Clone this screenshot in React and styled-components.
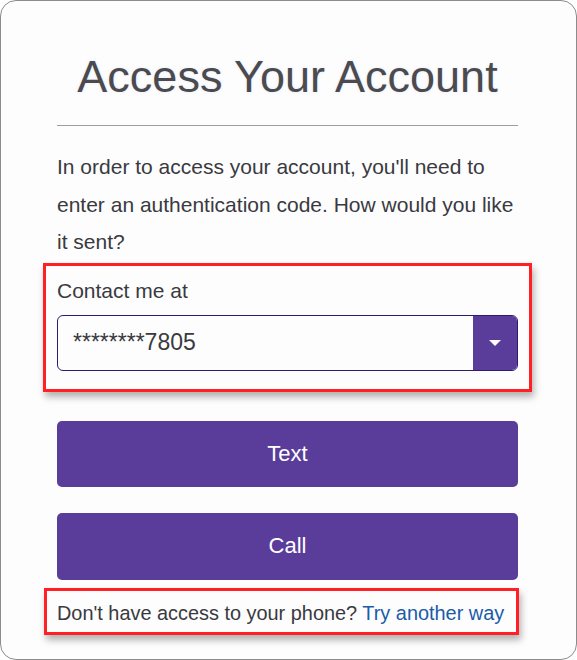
import React from 'react'
import styled, { createGlobalStyle } from 'styled-components'

const GlobalStyle = createGlobalStyle`
    * {
        box-sizing: border-box;
    }
    html, body {
        margin: 0;
        padding: 0;
        background: #ffffff;
        font-family: "Liberation Sans", Arial, sans-serif;
    }
`;

const Card = styled.div`
    width: 577px;
    height: 660px;
    border: 1px solid #8c8c8c;
    border-radius: 16px;
    background: #fdfdfe;
    padding: 51px 58px 0 56px;
    display: flex;
    flex-direction: column;
`;

const Title = styled.h1`
    margin: 0;
    font-size: 45px;
    line-height: 50px;
    font-weight: 400;
    text-align: center;
    color: #4b4b4f;
    text-shadow: 0 0 3px rgba(150, 170, 210, 0.25);
`;

const Divider = styled.hr`
    margin: 23px 0 0;
    border: none;
    border-top: 1px solid #a39c9c;
`;

const Intro = styled.p`
    margin: 22px 0 0;
    font-size: 21px;
    line-height: 37.5px;
    color: #3a3a3e;
`;

const Highlight = styled.div`
    border: 3px solid #ff1f24;
    box-shadow: 2px 5px 7px rgba(0, 0, 0, 0.3);
    margin: ${p => p.$top}px 0 0 ${p => p.$left}px;
    padding: ${p => p.$pad};
    align-self: ${p => (p.$fit ? 'flex-start' : 'stretch')};
    ${p => (p.$wide ? 'margin-right: -14px;' : '')}
`;

const Label = styled.div`
    font-size: 21px;
    line-height: 25px;
    color: #3a3a3e;
`;

const Select = styled.div`
    margin-top: 12px;
    height: 56px;
    display: flex;
    border: 1px solid #2e1a6e;
    border-radius: 6px;
    overflow: hidden;
    background: #fdfdfe;
`;

const SelectValue = styled.div`
    flex: 1;
    display: flex;
    align-items: center;
    padding-left: 15px;
    font-size: 23px;
    color: #3a3a3e;
`;

const SelectToggle = styled.div`
    width: 44px;
    background: #5a3d9a;
    display: flex;
    align-items: center;
    justify-content: center;
`;

const Caret = styled.span`
    width: 0;
    height: 0;
    border-left: 6px solid transparent;
    border-right: 6px solid transparent;
    border-top: 6px solid #ffffff;
    margin-top: 1px;
`;

const ActionButton = styled.button`
    margin-top: ${p => p.$top}px;
    height: ${p => p.$height}px;
    border: none;
    border-radius: 5px;
    background: #5a3d9a;
    color: #ffffff;
    font-family: "Liberation Sans", Arial, sans-serif;
    font-size: 22px;
    cursor: pointer;
`;

const Footer = styled.div`
    font-size: 19.9px;
    line-height: 24px;
    color: #3a3a3e;
    white-space: nowrap;
    a {
        color: #1b5ca8;
        text-decoration: none;
    }
`;

export default function App() {
    return (
        <>
            <GlobalStyle />
            <Card>
                <Title>Access Your Account</Title>
                <Divider />
                <Intro>
                    In order to access your account, you'll need to enter an authentication code. How would you like it sent?
                </Intro>

                <Highlight $top={2} $left={-14} $wide $pad="12px 11px 18px 11px">
                    <Label>Contact me at</Label>
                    <Select>
                        <SelectValue>********7805</SelectValue>
                        <SelectToggle>
                            <Caret />
                        </SelectToggle>
                    </Select>
                </Highlight>

                <ActionButton $top={29} $height={66}>Text</ActionButton>
                <ActionButton $top={26} $height={67}>Call</ActionButton>

                <Highlight $top={8} $left={-13} $fit $pad="10px 12px 7px 10px">
                    <Footer>
                        Don't have access to your phone? <a href="#">Try another way</a>
                    </Footer>
                </Highlight>
            </Card>
        </>
    )
}
